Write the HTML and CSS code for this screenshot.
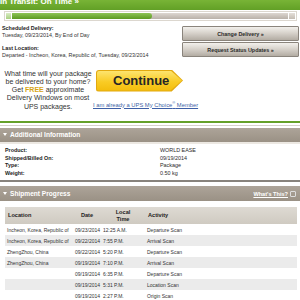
FILE: index.html
```html
<!DOCTYPE html>
<html>
<head>
<meta charset="utf-8">
<link rel="stylesheet" href="styles.css">
</head>
<body>
<div class="status-bar"><span class="status-title">In Transit: On Time »</span></div>
<div class="progress">
  <span class="progress-start"></span>
  <span class="progress-fill"></span>
  <span class="progress-track"></span>
  <span class="progress-end"></span>
</div>
<div class="summary">
  <div class="details">
    <div class="detail-label">Scheduled Delivery:</div>
    <div class="detail-value">Tuesday, 09/23/2014, By End of Day</div>
    <div class="detail-label detail-gap">Last Location:</div>
    <div class="detail-value">Departed - Incheon, Korea, Republic of, Tuesday, 09/23/2014</div>
  </div>
  <div class="actions">
    <a class="action-btn">Change Delivery »</a>
    <a class="action-btn">Request Status Updates »</a>
  </div>
</div>
<div class="promo">
  <p class="promo-text">What time will your package be delivered to your home? Get <b class="free">FREE</b> approximate Delivery Windows on most UPS packages.</p>
  <div class="promo-cta">
    <a class="continue"><span class="continue-inner">Continue</span></a>
    <a class="member">I am already a UPS My Choice<sup>®</sup> Member</a>
  </div>
</div>
<div class="rule-green"></div>
<div class="rule-grey"></div>
<div class="panel-head"><span class="tri"></span>Additional Information</div>
<div class="info">
  <div class="info-row"><span class="info-label">Product:</span><span>WORLD EASE</span></div>
  <div class="info-row"><span class="info-label">Shipped/Billed On:</span><span>09/19/2014</span></div>
  <div class="info-row"><span class="info-label">Type:</span><span>Package</span></div>
  <div class="info-row"><span class="info-label">Weight:</span><span>0.50 kg</span></div>
</div>
<div class="rule-dark"></div>
<div class="panel-head panel-head-2"><span class="tri"></span>Shipment Progress<a class="whats">What's This?</a><span class="help-icon"></span></div>
<table class="progress-table">
  <thead>
    <tr><th class="c-loc">Location</th><th class="c-date">Date</th><th class="c-time">Local<br>Time</th><th class="c-act">Activity</th></tr>
  </thead>
  <tbody>
    <tr><td>Incheon, Korea, Republic of</td><td>09/23/2014</td><td>12:25 A.M.</td><td>Departure Scan</td></tr>
    <tr><td>Incheon, Korea, Republic of</td><td>09/22/2014</td><td>7:55 P.M.</td><td>Arrival Scan</td></tr>
    <tr><td>ZhengZhou, China</td><td>09/22/2014</td><td>5:20 P.M.</td><td>Departure Scan</td></tr>
    <tr><td>ZhengZhou, China</td><td>09/19/2014</td><td>7:10 P.M.</td><td>Arrival Scan</td></tr>
    <tr><td></td><td>09/19/2014</td><td>6:35 P.M.</td><td>Departure Scan</td></tr>
    <tr><td></td><td>09/19/2014</td><td>5:31 P.M.</td><td>Location Scan</td></tr>
    <tr><td></td><td>09/19/2014</td><td>2:27 P.M.</td><td>Origin Scan</td></tr>
  </tbody>
</table>
</body>
</html>
```
FILE: styles.css
```css
html, body { margin: 0; padding: 0; }
body {
  font-family: "Liberation Sans", Arial, sans-serif;
  color: #2a2a2a;
  background: #fff;
  width: 300px;
  height: 300px;
  overflow: hidden;
}
.status-bar {
  height: 10px;
  background: linear-gradient(#78b436, #62a026);
  overflow: hidden;
}
.status-title {
  display: block;
  color: #fff;
  font-weight: bold;
  font-size: 8px;
  line-height: 10px;
  margin-top: -3.5px;
  padding-left: 0;
  white-space: nowrap;
}
.progress {
  display: flex;
  align-items: center;
  gap: 0;
  margin: 1px 3px 0 4px;
  padding: 1px;
  border: 1px solid #dcd7cf;
  height: 6px;
}
.progress-start {
  width: 5px; height: 6px;
  background: linear-gradient(#d9ecc4, #a8cf80);
  border-right: 1px solid #fff;
}
.progress-fill {
  width: 140px; height: 6px;
  background: linear-gradient(#8ec456, #5c9a22);
  border-radius: 0 4px 4px 0;
}
.progress-track {
  flex: 1; height: 6px;
  background: linear-gradient(#ddd7d1, #b9b1a9);
  margin-left: -3px;
  position: relative;
  z-index: -1;
}
.progress-end {
  width: 6px; height: 6px;
  background: linear-gradient(#e4dfd9, #c4bcb3);
  border-left: 1px solid #fff;
}
.summary {
  display: flex;
  justify-content: space-between;
  padding: 4px 1px 0 2px;
}
.details { font-size: 5.4px; line-height: 7px; }
.detail-label { font-weight: bold; color: #222; }
.detail-gap { margin-top: 5.5px; }
.detail-value { color: #333; white-space: nowrap; }
.actions {
  display: flex;
  flex-direction: column;
  gap: 1px;
  width: 117px;
  margin-top: 1px;
}
.action-btn {
  display: flex;
  align-items: center;
  justify-content: center;
  height: 15px;
  box-sizing: border-box;
  border: 1px solid #8a847c;
  border-radius: 1px;
  background: linear-gradient(#f2f0ec, #d8d3cc 45%, #b3aca3);
  font-size: 5.4px;
  font-weight: bold;
  color: #2a2a2a;
}
.promo {
  display: flex;
  margin-top: 11px;
  padding-left: 3px;
}
.promo-text {
  margin: 0;
  width: 90px;
  text-align: center;
  font-size: 7px;
  line-height: 8.3px;
  color: #333;
}
.free { color: #d7a514; font-weight: bold; }
.promo-cta {
  display: flex;
  flex-direction: column;
  align-items: flex-start;
  margin-left: 0;
}
.continue {
  display: block;
  width: 87px;
  height: 22px;
  margin-left: 3px;
  padding: 1px;
  box-sizing: border-box;
  background: #e2a910;
  border-radius: 3px 0 0 3px;
  clip-path: polygon(0 0, 87% 0, 100% 50%, 87% 100%, 0 100%);
}
.continue-inner {
  display: flex;
  align-items: center;
  height: 100%;
  padding-left: 16px;
  box-sizing: border-box;
  background: linear-gradient(#fde46f, #f9cb24 55%, #f3bd0c);
  border-radius: 2px 0 0 2px;
  clip-path: polygon(0 0, 86.5% 0, 100% 50%, 86.5% 100%, 0 100%);
  font-size: 13px;
  font-weight: bold;
  color: #262626;
}
.member {
  margin-top: 10px;
  font-size: 5.8px;
  line-height: 7px;
  color: #3d5fa6;
  text-decoration: underline;
  white-space: nowrap;
}
.member sup { font-size: 4px; line-height: 0; }
.rule-green {
  height: 2px;
  background: #64a02a;
  margin-top: 10px;
}
.rule-grey {
  height: 1px;
  background: #d6d2cc;
  margin-top: 2px;
}
.panel-head {
  display: flex;
  align-items: center;
  height: 14px;
  margin-top: 2px;
  padding-left: 3px;
  background: linear-gradient(#ada499, #9a9185);
  color: #fff;
  font-size: 6.6px;
  font-weight: bold;
}
.tri {
  width: 0; height: 0;
  border-left: 2.5px solid transparent;
  border-right: 2.5px solid transparent;
  border-top: 3px solid #fff;
  margin-right: 3px;
}
.info {
  padding: 3px 0 0 5px;
  border-top: 2px solid #ece8e2;
  font-size: 5.4px;
  line-height: 7.6px;
}
.info-row { display: flex; }
.info-label { width: 155px; font-weight: bold; color: #222; }
.rule-dark {
  height: 2px;
  background: #88837d;
  margin-top: 3px;
}
.panel-head-2 {
  height: 15px;
  margin-top: 4px;
}
.whats {
  margin-left: auto;
  font-size: 5.6px;
  font-weight: bold;
  color: #fff;
  text-decoration: underline;
}
.help-icon {
  width: 4px; height: 4px;
  margin: 0 4px 0 2px;
  border: 1px solid #ddd;
  border-radius: 1px;
}
.progress-table {
  margin: 6px 3px 0 5px;
  width: 292px;
  border-collapse: collapse;
  font-size: 5px;
  color: #333;
  table-layout: fixed;
}
.progress-table th {
  height: 17px;
  padding: 0;
  background: linear-gradient(#dedad3, #cfcac1);
  font-weight: bold;
  font-size: 5.6px;
  line-height: 7px;
  color: #222;
  text-align: left;
  vertical-align: middle;
}
.progress-table .c-loc { width: 65px; padding-left: 3px; }
.progress-table .c-date { width: 28px; text-align: center; }
.progress-table .c-time { width: 44px; text-align: center; }
.progress-table .c-act { padding-left: 3px; }
.progress-table td {
  height: 11px;
  padding: 0 0 0 2px;
  white-space: nowrap;
  overflow: hidden;
  vertical-align: middle;
}
.progress-table td:first-child { padding-left: 2px; }
.progress-table tbody tr:nth-child(even) td { background: #ebebeb; }
```
